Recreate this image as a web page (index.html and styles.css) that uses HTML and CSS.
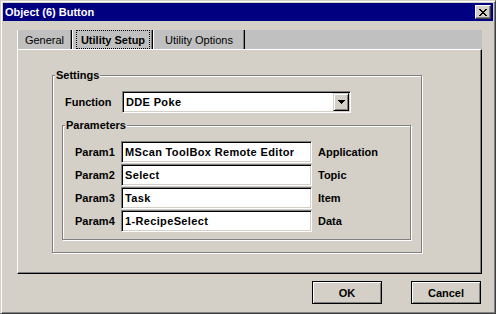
FILE: index.html
```html
<!DOCTYPE html>
<html>
<head>
<meta charset="utf-8">
<link rel="stylesheet" href="styles.css">
</head>
<body>
<div class="window">
  <div class="titlebar">
    <span class="title">Object (6) Button</span>
    <span class="close"><svg width="8" height="7" viewBox="0 0 8 7" shape-rendering="crispEdges"><path d="M0 0h2v1H0z M6 0h2v1H6z M1 1h2v1H1z M5 1h2v1H5z M2 2h4v1H2z M3 3h2v1H3z M2 4h4v1H2z M1 5h2v1H1z M5 5h2v1H5z M0 6h2v1H0z M6 6h2v1H6z" fill="#000"/></svg></span>
  </div>
  <div class="tabctl">
    <div class="tabs">
      <div class="tab t-general">General</div>
      <div class="tab t-setup active"><span class="focus">Utility Setup</span></div>
      <div class="tab t-options">Utility Options</div>
    </div>
    <div class="panel">
      <div class="group settings">
        <span class="caption">Settings</span>
        <div class="func-row">
          <span class="func-lbl">Function</span>
          <div class="combo">
            <span class="combo-val">DDE Poke</span>
            <span class="drop"><svg width="7" height="4" viewBox="0 0 7 4" shape-rendering="crispEdges"><path d="M0 0h7v1H0z M1 1h5v1H1z M2 2h3v1H2z M3 3h1v1H3z" fill="#000"/></svg></span>
          </div>
        </div>
        <div class="group params">
          <span class="caption">Parameters</span>
          <div class="prow"><span class="plbl">Param1</span><div class="field">MScan ToolBox Remote Editor</div><span class="rlbl">Application</span></div>
          <div class="prow"><span class="plbl">Param2</span><div class="field">Select</div><span class="rlbl">Topic</span></div>
          <div class="prow"><span class="plbl">Param3</span><div class="field">Task</div><span class="rlbl">Item</span></div>
          <div class="prow"><span class="plbl">Param4</span><div class="field">1-RecipeSelect</div><span class="rlbl">Data</span></div>
        </div>
      </div>
    </div>
  </div>
  <div class="buttons">
    <button class="btn">OK</button>
    <button class="btn">Cancel</button>
  </div>
</div>
</body>
</html>
```

FILE: styles.css
```css
* { box-sizing: border-box; }
html, body { margin: 0; padding: 0; }
body {
  width: 496px;
  height: 314px;
  overflow: hidden;
  font: bold 11px "Liberation Sans", Arial, sans-serif;
  color: #000;
  background: #d4d0c8;
}
.window {
  width: 496px;
  height: 314px;
  background: #d4d0c8;
  border: 1px solid;
  border-color: #d4d0c8 #404040 #404040 #d4d0c8;
  box-shadow: inset 1px 1px 0 #fff, inset -1px -1px 0 #808080;
  padding: 2px;
}
.titlebar {
  height: 18px;
  background: #000080;
  color: #fff;
  display: flex;
  align-items: center;
  justify-content: space-between;
  padding-left: 2px;
}
.title { font-weight: bold; font-size: 11px; line-height: 13px; }
.close {
  width: 16px;
  height: 14px;
  margin-right: 2px;
  background: #d4d0c8;
  border: 1px solid;
  border-color: #fff #404040 #404040 #fff;
  box-shadow: inset -1px -1px 0 #808080;
  display: flex;
  align-items: center;
  justify-content: center;
}
.close svg { display: block; }

.tabctl {
  margin: 9px 0 0 14px;
  width: 465px;
}
.tabs {
  height: 19px;
  background: #c0c0c0;
  display: flex;
}
.tab {
  height: 19px;
  display: flex;
  align-items: center;
  justify-content: center;
  font-weight: normal;
  border-left: 1px solid #fff;
  border-right: 1px solid #000;
  box-shadow: inset -1px 0 0 #808080;
}
.t-general { width: 55px; }
.t-setup { width: 81px; font-weight: bold; padding: 0 2px 0 3px; }
.t-options { width: 92px; }
.focus {
  flex: 1;
  height: 19px;
  border: 1px dotted #000;
  display: flex;
  align-items: center;
  justify-content: center;
}

.panel {
  height: 225px;
  border-top: 1px solid #fff;
  border-left: 1px solid #fff;
  border-right: 1px solid #000;
  border-bottom: 1px solid #000;
  box-shadow: inset -1px -1px 0 #808080;
  padding: 25px 0 0 34px;
}
.group {
  position: relative;
  border: 1px solid #808080;
  box-shadow: inset 1px 1px 0 #fff, 1px 1px 0 #fff;
}
.caption {
  position: absolute;
  top: -7px;
  left: 2px;
  line-height: 13px;
  padding: 0 1px;
  background: #d4d0c8;
}
.settings {
  width: 370px;
  height: 178px;
}
.func-row {
  display: flex;
  align-items: center;
  margin: 15px 0 0 12px;
  height: 22px;
}
.func-lbl { width: 57px; }
.combo {
  width: 229px;
  height: 22px;
  background: #fff;
  border: 1px solid;
  border-color: #808080 #fff #fff #808080;
  box-shadow: inset 1px 1px 0 #000, inset -1px -1px 0 #d4d0c8;
  padding: 1px;
  display: flex;
  align-items: center;
}
.combo-val { flex: 1; padding-left: 2px; letter-spacing: 0.35px; }
.drop {
  width: 16px;
  height: 18px;
  background: #d4d0c8;
  border: 1px solid;
  border-color: #d4d0c8 #000 #000 #d4d0c8;
  box-shadow: inset 1px 1px 0 #fff, inset -1px -1px 0 #808080;
  display: flex;
  align-items: center;
  justify-content: center;
}
.drop svg { display: block; }

.params {
  width: 349px;
  height: 115px;
  margin: 12px 0 0 9px;
  padding-top: 15px;
  display: flex;
  flex-direction: column;
  gap: 1px;
}
.prow {
  display: flex;
  align-items: center;
  height: 22px;
  margin-left: 12px;
}
.plbl { width: 46px; }
.field {
  width: 191px;
  height: 22px;
  background: #fff;
  border: 1px solid;
  border-color: #808080 #fff #fff #808080;
  box-shadow: inset 1px 1px 0 #000, inset -1px -1px 0 #d4d0c8;
  padding-left: 3px;
  display: flex;
  align-items: center;
  letter-spacing: 0.35px;
  white-space: nowrap;
}
.rlbl { margin-left: 6px; }

.buttons {
  display: flex;
  justify-content: flex-end;
  gap: 29px;
  margin-top: 7px;
  padding-right: 12px;
}
.btn {
  width: 70px;
  height: 23px;
  background: #d4d0c8;
  border: 1px solid #000;
  box-shadow: inset 1px 1px 0 #fff, inset -1px -1px 0 #808080;
  font: bold 11px "Liberation Sans", Arial, sans-serif;
  color: #000;
  padding: 0;
}
```
